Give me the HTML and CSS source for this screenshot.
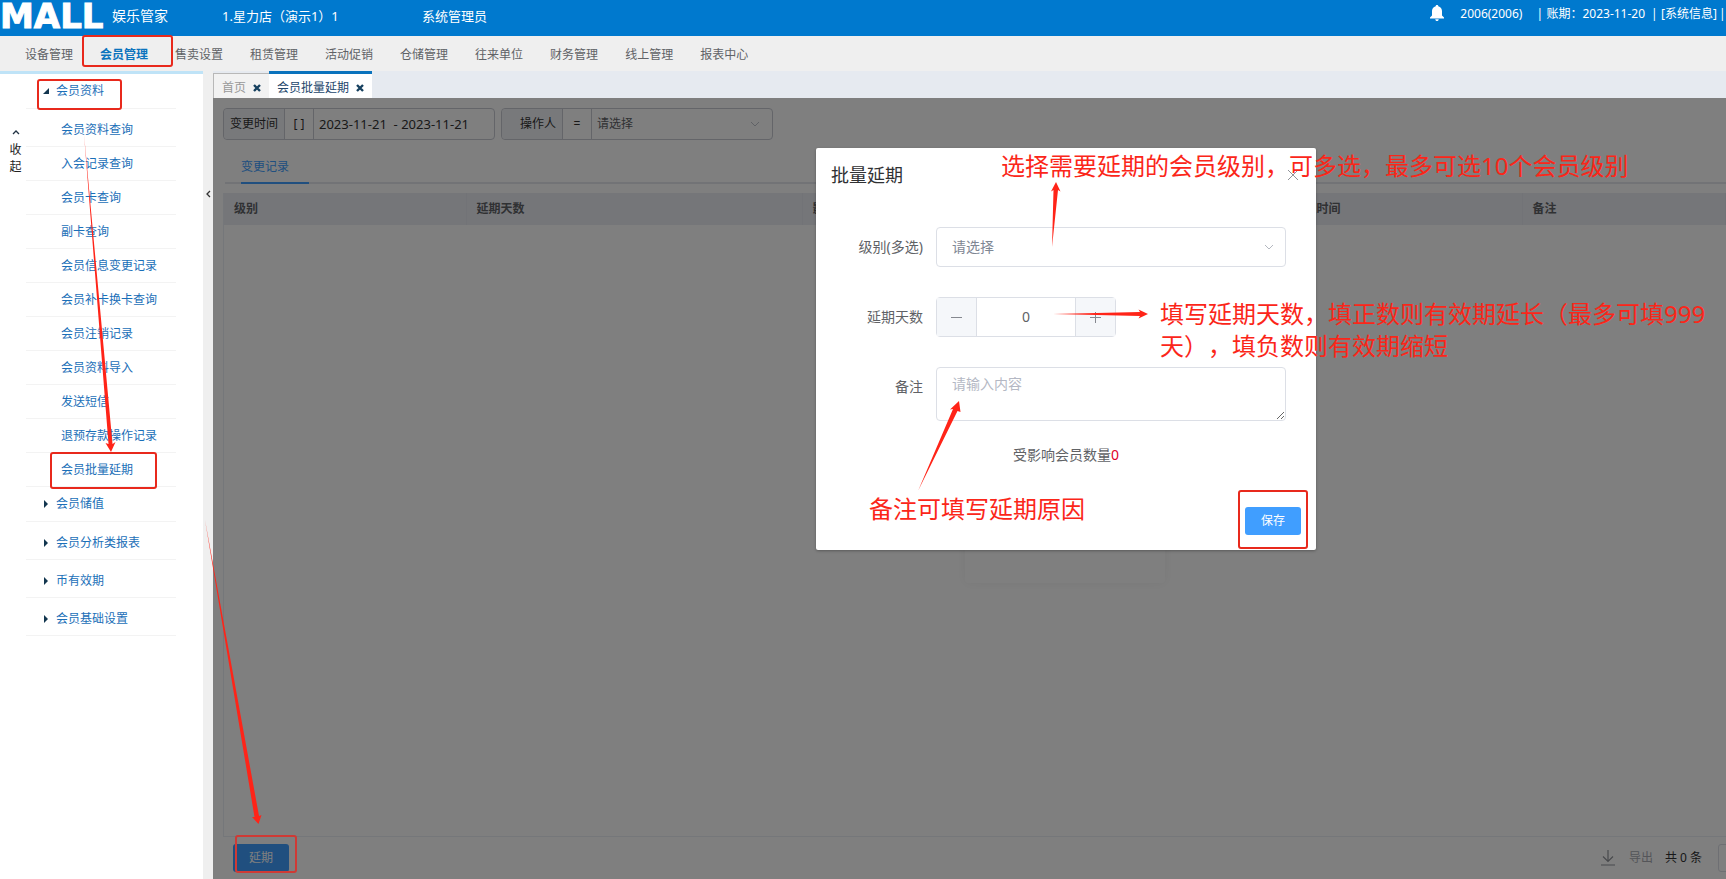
FILE: index.html
```html
<!DOCTYPE html>
<html lang="zh-CN">
<head>
<meta charset="utf-8">
<title>会员批量延期</title>
<link rel="stylesheet" href="styles.css">
</head>
<body>
<header class="topbar">
  <span class="logo">MALL</span>
  <span class="product">娱乐管家</span>
  <span class="store">1.星力店（演示1）1</span>
  <span class="role">系统管理员</span>
  <div class="account">
    <svg class="bell" viewBox="0 0 14 16" aria-hidden="true"><path d="M7 0c.8 0 1.300.5 1.300 1.200C10.600 1.800 12 3.700 12 6v4.500l2 2v.9H0v-.9l2-2V6c0-2.300 1.400-4.200 3.700-4.800C5.700.5 6.200 0 7 0zM5.300 14.200h3.400C8.700 15.300 8 16 7 16s-1.700-.7-1.700-1.800z" fill="#fff"/></svg>
    <span class="user">2006(2006)</span>
    <span class="bar">|</span>
    <span class="period">账期：2023-11-20</span>
    <span class="bar">|</span>
    <a class="sysinfo" href="#">[系统信息]</a>
    <span class="bar">|</span>
  </div>
</header>
<nav class="mainnav">
  <a href="#">设备管理</a><a class="current" href="#">会员管理</a><a href="#">售卖设置</a><a href="#">租赁管理</a><a href="#">活动促销</a><a href="#">仓储管理</a><a href="#">往来单位</a><a href="#">财务管理</a><a href="#">线上管理</a><a href="#">报表中心</a>
</nav>
<div class="workspace">
  <aside class="sidebar">
    <button class="fold" type="button">
      <svg viewBox="0 0 8 5" aria-hidden="true"><path d="M1 4l3-3 3 3" fill="none" stroke="#234" stroke-width="1.300"/></svg>
      <span>收</span><span>起</span>
    </button>
    <ul class="menu">
      <li class="group"><a href="#"><svg class="tri" viewBox="0 0 6 6" aria-hidden="true"><path d="M6 0v6H0z" fill="#12364f"/></svg>会员资料</a></li>
      <li class="item spaced"><a href="#">会员资料查询</a></li>
      <li class="item"><a href="#">入会记录查询</a></li>
      <li class="item"><a href="#">会员卡查询</a></li>
      <li class="item"><a href="#">副卡查询</a></li>
      <li class="item"><a href="#">会员信息变更记录</a></li>
      <li class="item"><a href="#">会员补卡换卡查询</a></li>
      <li class="item"><a href="#">会员注销记录</a></li>
      <li class="item"><a href="#">会员资料导入</a></li>
      <li class="item"><a href="#">发送短信</a></li>
      <li class="item"><a href="#">退预存款操作记录</a></li>
      <li class="item"><a href="#">会员批量延期</a></li>
      <li class="group"><a href="#"><svg class="tri" viewBox="0 0 6 8" aria-hidden="true"><path d="M1 0l4 4-4 4z" fill="#12364f"/></svg>会员储值</a></li>
      <li class="group spaced"><a href="#"><svg class="tri" viewBox="0 0 6 8" aria-hidden="true"><path d="M1 0l4 4-4 4z" fill="#12364f"/></svg>会员分析类报表</a></li>
      <li class="group spaced"><a href="#"><svg class="tri" viewBox="0 0 6 8" aria-hidden="true"><path d="M1 0l4 4-4 4z" fill="#12364f"/></svg>币有效期</a></li>
      <li class="group spaced"><a href="#"><svg class="tri" viewBox="0 0 6 8" aria-hidden="true"><path d="M1 0l4 4-4 4z" fill="#12364f"/></svg>会员基础设置</a></li>
    </ul>
  </aside>
  <button class="splitter" type="button" aria-label="收起侧栏"><svg viewBox="0 0 5 8" aria-hidden="true"><path d="M4 1L1 4l3 3" fill="none" stroke="#333" stroke-width="1.300"/></svg></button>
  <main class="main">
    <div class="tabs">
      <div class="tab">首页<button type="button" aria-label="关闭首页"><svg viewBox="0 0 8 8" aria-hidden="true"><path d="M1 1l6 6M7 1L1 7" stroke="#17415f" stroke-width="2.400"/></svg></button></div>
      <div class="tab active">会员批量延期<button type="button" aria-label="关闭会员批量延期"><svg viewBox="0 0 8 8" aria-hidden="true"><path d="M1 1l6 6M7 1L1 7" stroke="#17415f" stroke-width="2.400"/></svg></button></div>
    </div>
    <section class="page">
      <div class="filters">
        <div class="filter">
          <label class="name" for="range">变更时间</label>
          <span class="op">[ ]</span>
          <input id="range" type="text" value="2023-11-21  - 2023-11-21">
        </div>
        <div class="filter">
          <label class="name right" for="operator">操作人</label>
          <span class="op">=</span>
          <select id="operator"><option>请选择</option></select>
          <svg class="chev" viewBox="0 0 10 6" aria-hidden="true"><path d="M1 1l4 4 4-4" fill="none" stroke="#c0c4cc"/></svg>
        </div>
      </div>
      <div class="subtabs"><a href="#">变更记录</a></div>
      <div class="grid">
        <table>
          <colgroup><col class="c1"><col class="c2"><col class="c3"><col class="c4"><col></colgroup>
          <thead><tr><th>级别</th><th>延期天数</th><th>影响会员数量</th><th>变更时间</th><th>备注</th></tr></thead>
        </table>
      </div>
      <div class="loading"></div>
      <footer class="foot">
        <button class="primary" type="button">延期</button>
        <div class="pager">
          <svg class="down" viewBox="0 0 14 16" aria-hidden="true"><path d="M7 0v11M2 6.500l5 5 5-5M0 15h14" fill="none" stroke="#909399" stroke-width="1.200"/></svg>
          <a href="#">导出</a>
          <span>共 0 条</span>
          <select class="size" aria-label="每页条数"><option></option></select>
        </div>
      </footer>
      <div class="mask"></div>
      <form class="dialog" role="dialog" aria-labelledby="dlg-title">
        <div class="dlg-head">
          <h2 id="dlg-title">批量延期</h2>
          <button class="close" type="button" aria-label="关闭"><svg viewBox="0 0 12 12" aria-hidden="true"><path d="M1 1l10 10M11 1L1 11" stroke="#909399"/></svg></button>
        </div>
        <div class="row">
          <label for="level">级别(多选)</label>
          <div class="pick"><select id="level"><option>请选择</option></select>
          <svg class="chev" viewBox="0 0 10 6" aria-hidden="true"><path d="M1 1l4 4 4-4" fill="none" stroke="#b4b8c0"/></svg></div>
        </div>
        <div class="row">
          <label for="days">延期天数</label>
          <div class="stepper">
            <button type="button" aria-label="减少"><svg viewBox="0 0 11 11" aria-hidden="true"><path d="M0 5.500h11" stroke="#85888f"/></svg></button>
            <input id="days" type="text" value="0">
            <button type="button" aria-label="增加"><svg viewBox="0 0 11 11" aria-hidden="true"><path d="M0 5.500h11M5.500 0v11" stroke="#85888f"/></svg></button>
          </div>
        </div>
        <div class="row">
          <label for="note">备注</label>
          <textarea id="note" placeholder="请输入内容"></textarea>
        </div>
        <p class="affected">受影响会员数量<b>0</b></p>
        <div class="dlg-foot"><button class="save" type="submit">保存</button></div>
      </form>
    </section>
  </main>
</div>

<svg class="marks" width="1726" height="879" aria-hidden="true">
  <g class="boxes">
    <rect x="83" y="36" width="89" height="30" rx="2"/>
    <rect x="38" y="80" width="83" height="29" rx="2"/>
    <rect x="51" y="453" width="105" height="35" rx="2"/>
    <rect class="dim" x="236" y="836" width="60" height="36" rx="2"/>
    <rect x="1239" y="491" width="68" height="57" rx="2"/>
  </g>
  <g class="arrows">
    <path d="M84 134L112.500 444L115.500 442L111 452L105.500 443L108.500 444z"/>
    <path d="M205 520L259 816L261.500 815L258.500 824L252 817L254.500 817z"/>
    <path d="M1052 247L1053.500 190L1051 191.500L1056 182L1060.500 191.500L1058 190z"/>
    <path d="M1053 314L1140 312L1138.500 309.500L1148 314L1138.500 318.500L1140 316z"/>
    <path d="M918 491L953 409L950 409.500L959 401L960.500 412L957.500 411z"/>
  </g>
</svg>
<p class="note n1">选择需要延期的会员级别，可多选，最多可选10个会员级别</p>
<p class="note n2">填写延期天数，填正数则有效期延长（最多可填999<br>天），填负数则有效期缩短</p>
<p class="note n3">备注可填写延期原因</p>
</body>
</html>
```

FILE: styles.css
```css
* { box-sizing: border-box; }
body {
  margin: 0;
  height: 100vh;
  position: relative;
  display: flex;
  flex-direction: column;
  overflow: hidden;
  font: 12px/18px "Noto Sans", "Noto Sans CJK SC", sans-serif;
  text-spacing-trim: space-all;
  color: #606266;
  background: #fff;
}
a { color: inherit; text-decoration: none; }
button, input, select, textarea { font: inherit; color: inherit; margin: 0; }
button { padding: 0; border: 0; background: none; }
select { appearance: none; }
svg { display: block; flex: none; }

/* header */
.topbar {
  height: 36px;
  flex: none;
  display: flex;
  align-items: center;
  padding-bottom: 4px;
  background: #0079ce;
  color: #fff;
  font-size: 13px;
  line-height: 20px;
  white-space: nowrap;
}
.logo {
  width: 112px;
  font: bold 34px/30px "DejaVu Sans", sans-serif;
  -webkit-text-stroke: 1px #fff;
}
.product { width: 110px; font-size: 14px; line-height: 20px; }
.store { width: 200px; }
.account { margin-left: auto; padding-bottom: 4px; display: flex; font-size: 12px; line-height: 18px; }
.bell { width: 14px; height: 16px; margin-right: 16px; }
.user { margin-right: 14px; }
.bar { width: 10px; }
.period { margin-right: 6px; }
.sysinfo { margin-right: 2px; }
.account .bar:last-child { width: 7px; }

.mainnav {
  height: 35px;
  flex: none;
  display: flex;
  gap: 27px;
  padding-left: 25px;
  background: #efefef;
  line-height: 38px;
}
.mainnav .current { color: #0a73bd; font-weight: bold; }

.workspace { flex: 1; display: flex; min-height: 0; }

/* sidebar */
.sidebar {
  width: 203px;
  flex: none;
  display: flex;
  align-items: flex-start;
  border-top: 3px solid #bfe3f7;
}
.fold {
  width: 26px;
  padding: 56px 0 0 5px;
  display: flex;
  flex-direction: column;
  align-items: center;
  line-height: 17px;
  color: #222;
}
.fold svg { width: 8px; height: 5px; margin-bottom: 6px; }
.menu { width: 150px; margin: 0; padding: 0; list-style: none; color: #1b6fb8; }
.menu li { height: 34px; border-bottom: 1px solid #f3f3f3; line-height: 34px; }
.menu .group { height: 35px; }
.menu .spaced { height: 38px; padding-top: 4px; }
.item { padding-left: 35px; }
.group a { display: flex; align-items: center; padding-left: 17px; }
.tri { width: 6px; height: 8px; margin-right: 7px; }

.splitter {
  width: 10px;
  flex: none;
  display: flex;
  justify-content: center;
  padding-top: 119px;
  background: #efefef;
}
.splitter svg { width: 5px; height: 8px; }

/* main area */
.main { flex: 1; min-width: 0; display: flex; flex-direction: column; }
.tabs { height: 27px; flex: none; display: flex; align-items: flex-end; background: #e6eaf0; }
.tab {
  height: 25px;
  display: flex;
  align-items: center;
  gap: 7px;
  padding: 3px 8px 0;
  border: solid #b8b8b8;
  border-width: 1px 0 0 1px;
  background: #f2f2f2;
  color: #999;
}
.tab svg { width: 8px; height: 8px; }
.tab.active {
  height: 27px;
  border: 0;
  border-top: 3px solid #0a73bd;
  background: #fff;
  color: #23466b;
}
.page {
  position: relative;
  flex: 1;
  min-height: 0;
  display: flex;
  flex-direction: column;
  padding: 10px 0 7px 10px;
  overflow: hidden;
}
.filters { display: flex; gap: 6px; }
.filter {
  position: relative;
  width: 272px;
  height: 32px;
  display: flex;
  border: 1px solid #c8cad2;
  border-radius: 4px;
  line-height: 30px;
  color: #333;
}
.name { flex: none; width: 60px; background: #f0f2f7; text-align: center; border-radius: 4px 0 0 4px; }
.name.right { padding-left: 12px; }
.op { flex: none; width: 30px; border: solid #c8cad2; border-width: 0 1px; text-align: center; }
.filter input, .filter select {
  flex: 1;
  min-width: 0;
  padding: 0 5px;
  border: 0;
  background: none;
  white-space: pre;
}
.filter input { font-size: 13px; }
.filter select { color: #606266; }
.chev { position: absolute; right: 12px; top: 12px; width: 10px; height: 6px; }

.subtabs {
  display: flex;
  margin: 18px 0 9px 2px;
  padding-left: 16px;
  border-bottom: 2px solid #e4e7ed;
}
.subtabs a {
  width: 68px;
  margin-bottom: -2px;
  padding-bottom: 6px;
  border-bottom: 2px solid #409eff;
  color: #409eff;
}
.grid { flex: 1; border: solid #ebeef5; border-width: 0 0 1px 1px; }
.grid table { width: 100%; border-collapse: collapse; table-layout: fixed; }
.grid th {
  height: 32px;
  padding: 0 10px;
  border-right: 1px solid #e4e7ee;
  background: #ebedf3;
  color: #606266;
  text-align: left;
}
.c1 { width: 242px; }
.c2 { width: 336px; }
.c3 { width: 480px; }
.c4 { width: 240px; }

.foot { display: flex; align-items: center; padding: 7px 0 0 10px; }
.primary { width: 56px; height: 28px; border-radius: 3px; background: #409eff; color: #fff; }
.pager { margin-left: auto; display: flex; align-items: center; }
.pager svg { width: 14px; height: 16px; margin-right: 14px; }
.pager a { margin-right: 12px; color: #a8abb3; }
.pager span { margin-right: 16px; color: #303133; }
.size {
  width: 90px;
  height: 28px;
  margin-right: -82px;
  border: 1px solid #dcdfe6;
  border-radius: 3px;
  background: none;
}
.loading {
  position: absolute;
  left: 752px;
  top: 400px;
  width: 200px;
  height: 85px;
  border-radius: 4px;
  box-shadow: 0 0 12px rgba(0, 0, 0, .06);
}
.mask { position: absolute; inset: 0; background: rgba(0, 0, 0, .5); }

/* dialog */
.dialog {
  position: absolute;
  left: 603px;
  top: 50px;
  width: 500px;
  padding-bottom: 15px;
  border-radius: 2px;
  background: #fff;
  box-shadow: 0 1px 3px rgba(0, 0, 0, .3);
  font-size: 14px;
  line-height: 20px;
}
.dlg-head { display: flex; align-items: center; padding: 15px 17px 40px 15px; }
.dlg-head h2 { margin: 0; font-size: 18px; line-height: 24px; font-weight: normal; color: #303133; }
.close { margin-left: auto; }
.close svg { width: 12px; height: 12px; }
.row { display: flex; gap: 13px; margin-right: 30px; }
.row + .row { margin-top: 30px; }
.row label { width: 107px; text-align: right; line-height: 40px; }
.pick { position: relative; flex: 1; display: flex; }
.pick select {
  width: 100%;
  height: 40px;
  padding: 0 15px;
  border: 1px solid #dcdfe6;
  border-radius: 4px;
  background: #fff;
  color: #7f8794;
}
.pick .chev { top: 17px; }
.stepper { width: 180px; height: 40px; display: flex; border: 1px solid #dcdfe6; border-radius: 4px; }
.stepper button { width: 39px; display: flex; align-items: center; justify-content: center; background: #f5f7fa; }
.stepper svg { width: 11px; height: 11px; }
.stepper input {
  flex: 1;
  min-width: 0;
  border: solid #dcdfe6;
  border-width: 0 1px;
  text-align: center;
}
.row textarea {
  flex: 1;
  height: 54px;
  padding: 6px 15px;
  border: 1px solid #dcdfe6;
  border-radius: 4px;
}
.row textarea::placeholder { color: #b4b8c4; }
.affected { margin: 24px 0 42px; text-align: center; }
.affected b { font-weight: normal; color: #e00028; }
.dlg-foot { display: flex; justify-content: flex-end; padding-right: 15px; }
.save { width: 56px; height: 28px; border-radius: 3px; background: #409eff; color: #fff; font-size: 12px; }

/* callouts over the screen */
.marks { position: absolute; left: 0; top: 0; pointer-events: none; }
.boxes { fill: none; stroke: #e8291c; stroke-width: 2; }
.boxes .dim { stroke: #cf3a35; }
.arrows { fill: #ff2418; }
.note {
  position: absolute;
  margin: 0;
  color: #fb2619;
  font-size: 24px;
  line-height: 32px;
  white-space: nowrap;
  pointer-events: none;
}
.n1 { left: 1001px; top: 150px; }
.n2 { left: 1160px; top: 298px; }
.n3 { left: 869px; top: 493px; }
```
